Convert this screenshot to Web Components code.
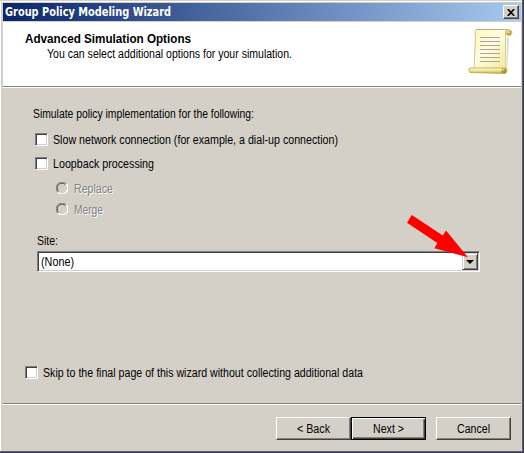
<!DOCTYPE html>
<html lang="en"><head><meta charset="utf-8"><title>Group Policy Modeling Wizard</title>
<style>html,body{margin:0;width:524px;height:453px;overflow:hidden;background:#d4d0c8}</style></head>
<body><policy-wizard></policy-wizard>
<script>
const define=(name,html,setup)=>customElements.define(name,class extends HTMLElement{
  constructor(){super();this.attachShadow({mode:'open'}).innerHTML=html}
  connectedCallback(){if(setup)setup.call(this,this.shadowRoot)}
});

// A single line of text condensed to the width given in "w".
define('ui-text',`<style>:host{display:block;flex:none;height:14px;font:12.5px/14px "Liberation Sans",Arial,sans-serif;white-space:nowrap}
span{display:inline-block;transform-origin:0 50%}</style><span><slot></slot></span>`,function(r){
  const w=+this.getAttribute('w'),s=r.querySelector('span');
  this.style.width=w+'px';
  s.style.transform='scaleX('+w/s.getBoundingClientRect().width+')';
});

define('title-bar',`<style>:host{display:flex;box-sizing:border-box;height:18px;align-items:center;justify-content:space-between;padding:0 2px;background:linear-gradient(90deg,#0a246a,#a6caf0);color:#fff}
ui-text{font:bold 11.5px/14px "DejaVu Sans",sans-serif}
button{box-sizing:border-box;width:16px;height:14px;padding:0;border:1px solid;border-color:#fff #404040 #404040 #fff;box-shadow:inset -1px -1px #808080;background:#d4d0c8;display:grid;place-items:center}
svg{display:block}</style><ui-text w="166">Group Policy Modeling Wizard</ui-text><button aria-label="Close"><svg width="8" height="7" viewBox="0 0 8 7"><path d="M.8 0 7.2 7M7.2 0 .8 7" stroke="#000" stroke-width="1.7"/></svg></button>`);

define('scroll-icon',`<style>:host{display:block;width:46px;height:48px}svg{display:block}</style>
<svg width="46" height="48" viewBox="0 0 46 48"><defs><linearGradient id="p" x2="1" y2="1"><stop stop-color="#fff5b8"/><stop offset=".45" stop-color="#fffce0"/><stop offset="1" stop-color="#f3e88f"/></linearGradient><linearGradient id="r" x2="0" y2="1"><stop stop-color="#fffbd0"/><stop offset=".5" stop-color="#f2e58c"/><stop offset="1" stop-color="#b9a444"/></linearGradient></defs>
<path d="M8 42 39 45 41 10 39 9V41" fill="#bbb" opacity=".55"/>
<path d="M8 1.5H40Q37 3 37.5 8L38 41H6L7.5 8Q6 3 8 1.5Z" fill="url(#p)" stroke="#c9bd83" stroke-width=".9"/>
<path d="M9 1.5H41Q44.5 2 44 5Q43 8 40 7.5L37.5 6Q37 2 40 1.5" fill="url(#r)" stroke="#b9aa61" stroke-width=".7"/>
<circle cx="41.2" cy="4.8" r="2.2" fill="#b9a444"/><circle cx="40.7" cy="4.2" r="1" fill="#f6eca0"/>
<path d="M12 9.5H32M12 13.5H32M12 17.5H32M12 21.5H32M12 25.5H32M12 29.5H32M12 33.5H32" stroke="#aaa59e"/>
<path d="M2 40H37Q39 40 39 42.5T37 45.5L2 44.5Q1 44 1 42T2 40Z" fill="url(#r)" stroke="#b9a65a" stroke-width=".8"/>
<circle cx="36" cy="42.7" r="2.5" fill="#aa9334"/><circle cx="35.4" cy="42" r="1" fill="#f0e389"/></svg>`);

define('wizard-header',`<style>:host{display:flex;box-sizing:border-box;height:65px;background:#fff;border-bottom:1px solid #808080;justify-content:space-between;padding:6px 7px 0 22px}
div{padding-top:4px}ui-text[b]{font-weight:bold}ui-text+ui-text{margin:1px 0 0 22px}</style>
<div><ui-text b w="166">Advanced Simulation Options</ui-text><ui-text w="245">You can select additional options for your simulation.</ui-text></div><scroll-icon></scroll-icon>`);

define('check-box',`<style>:host{display:flex;height:14px;gap:5px}i{box-sizing:border-box;width:13px;height:13px;border:1px solid;border-color:#808080 #fff #fff #808080;box-shadow:inset 1px 1px #404040,inset -1px -1px #d4d0c8;background:#fff}</style><i></i><slot></slot>`);

define('radio-button',`<style>:host{display:flex;height:14px;gap:6px;color:#808080;text-shadow:1px 1px #fff}svg{display:block}</style>
<svg width="12" height="12" viewBox="0 0 12 12"><g fill="none"><path d="M1.8 10.2A5.5 5.5 0 0 1 10.2 1.8" stroke="#808080"/><path d="M2.6 9.4A4.5 4.5 0 0 1 9.4 2.6" stroke="#505050"/><path d="M1.8 10.2A5.5 5.5 0 0 0 10.2 1.8" stroke="#fff" stroke-width="1.2"/></g></svg><slot></slot>`);

define('combo-box',`<style>:host{display:flex;box-sizing:border-box;width:443px;height:21px;border:1px solid;border-color:#808080 #fff #fff #808080;box-shadow:inset 1px 1px #404040,inset -1px -1px #d4d0c8;background:#fff;padding:1px 1px 1px 3px;justify-content:space-between}
slot{display:block;padding-top:2px}button{box-sizing:border-box;width:16px;height:17px;padding:0;border:1px solid;border-color:#d4d0c8 #404040 #404040 #d4d0c8;box-shadow:inset 1px 1px #fff,inset -1px -1px #808080;background:#d4d0c8;display:grid;place-items:center}svg{display:block}</style>
<slot></slot><button aria-label="Open list"><svg width="8" height="4" viewBox="0 0 8 4"><path d="M0 0H8L4 4Z"/></svg></button>`);

define('push-button',`<style>:host{display:block;width:75px;height:23px}button{box-sizing:border-box;width:100%;height:100%;padding:0;display:grid;place-items:center;color:#000;background:#d4d0c8;border:1px solid;border-color:#fff #404040 #404040 #fff;box-shadow:inset -1px -1px #808080}
:host([default]) button{border-color:#000;box-shadow:inset 1px 1px #fff,inset -1px -1px #404040,inset -2px -2px #808080}</style><button><slot></slot></button>`);

define('wizard-body',`<style>:host{display:flex;flex-direction:column;align-items:flex-start;box-sizing:border-box;height:317px;border-top:1px solid #fff;border-bottom:1px solid #808080;padding:19px 0 0 30px}
.c{margin:12px 0 0 2px}.c2{margin:10px 0 0 2px}.r{margin:11px 0 0 23px}.r2{margin:7px 0 0 23px}.s{margin:17px 0 0 4px}combo-box{margin:3px 0 0 4px}.k{margin:94px 0 0 -8px}</style>
<ui-text w="221">Simulate policy implementation for the following:</ui-text>
<check-box class="c"><ui-text w="285">Slow network connection (for example, a dial-up connection)</ui-text></check-box>
<check-box class="c2"><ui-text w="101">Loopback processing</ui-text></check-box>
<radio-button class="r"><ui-text w="39">Replace</ui-text></radio-button>
<radio-button class="r2"><ui-text w="29">Merge</ui-text></radio-button>
<ui-text class="s" w="21">Site:</ui-text><combo-box><ui-text w="33">(None)</ui-text></combo-box>
<check-box class="k"><ui-text w="320">Skip to the final page of this wizard without collecting additional data</ui-text></check-box>`);

define('wizard-footer',`<style>:host{display:flex;box-sizing:border-box;height:47px;border-top:1px solid #fff;padding:12px 10px 0 0;justify-content:flex-end}push-button:last-of-type{margin-left:10px}</style>
<push-button><ui-text w="33">&lt; Back</ui-text></push-button><push-button default><ui-text w="31">Next &gt;</ui-text></push-button><push-button><ui-text w="33">Cancel</ui-text></push-button>`);

define('pointer-arrow',`<style>:host{position:absolute;left:404px;top:212px}svg{display:block}</style><svg width="68" height="48" viewBox="404 212 68 48"><path d="M411.8 215 407 222.8 437.3 243 434.4 248.2 468 257.3 446 230.5 442.8 235.4Z" fill="#f00"/></svg>`);

define('policy-wizard',`<style>:host{display:block;box-sizing:border-box;position:relative;width:524px;height:453px;color:#000;background:#d4d0c8;padding:3px 3px 0;border:0;box-shadow:inset -1px -1px #34395c,inset -2px -2px #606060,inset 0 1px #d4d0c8,inset 1px 2px #fff}
wizard-header{margin-top:1px}</style>
<title-bar></title-bar><wizard-header></wizard-header><wizard-body></wizard-body><wizard-footer></wizard-footer><pointer-arrow></pointer-arrow>`);
</script></body></html>
